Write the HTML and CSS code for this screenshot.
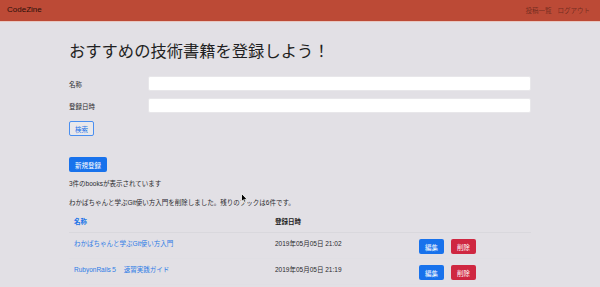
FILE: index.html
```html
<!DOCTYPE html>
<html lang="ja">
<head>
<meta charset="utf-8">
<title>CodeZine</title>
<link rel="stylesheet" href="styles.css">
</head>
<body>
<nav class="navbar">
  <a class="brand" href="#">CodeZine</a>
  <div class="nav-links">
    <a href="#">投稿一覧</a>
    <a href="#">ログアウト</a>
  </div>
</nav>
<main class="container">
  <h1 class="title">おすすめの技術書籍を登録しよう！</h1>
  <form class="search-form">
    <div class="form-row">
      <label class="form-label">名称</label>
      <input class="form-input" type="text">
    </div>
    <div class="form-row">
      <label class="form-label">登録日時</label>
      <input class="form-input" type="text">
    </div>
    <button type="button" class="btn btn-outline">検索</button>
  </form>
  <button type="button" class="btn btn-primary btn-new">新規登録</button>
  <p class="count">3件のbooksが表示されています</p>
  <p class="notice">わかばちゃんと学ぶGit使い方入門を削除しました。残りのブックは6件です。</p>
  <table class="books">
    <colgroup>
      <col class="col-name">
      <col class="col-date">
      <col>
    </colgroup>
    <thead>
      <tr>
        <th><a class="sort" href="#">名称</a></th>
        <th>登録日時</th>
        <th></th>
      </tr>
    </thead>
    <tbody>
      <tr>
        <td><a class="book-link" href="#">わかばちゃんと学ぶGit使い方入門</a></td>
        <td>2019年05月05日 21:02</td>
        <td class="actions"><button type="button" class="btn btn-primary">編集</button><button type="button" class="btn btn-danger">削除</button></td>
      </tr>
      <tr>
        <td><a class="book-link" href="#">RubyonRails５　速習実践ガイド</a></td>
        <td>2019年05月05日 21:19</td>
        <td class="actions"><button type="button" class="btn btn-primary">編集</button><button type="button" class="btn btn-danger">削除</button></td>
      </tr>
    </tbody>
  </table>
</main>
<svg class="cursor" width="7" height="11" viewBox="0 0 7 11"><path d="M0.5 0.5 L0.5 8.5 L2.4 6.8 L3.8 10 L5 9.5 L3.7 6.4 L6.2 6.4 Z" fill="#000" stroke="#fff" stroke-width="0.8"/></svg>
</body>
</html>
```

FILE: styles.css
```css
* { box-sizing: border-box; }

body {
  margin: 0;
  background: #e2e0e5;
  font-family: "Liberation Sans", "Noto Sans CJK JP", sans-serif;
  color: #2a2a2e;
  font-size: 6.5px;
  line-height: 10px;
}

a { text-decoration: none; }

.navbar {
  height: 22px;
  display: flex;
  align-items: center;
  justify-content: space-between;
  padding: 0 10px 1px 7px;
  background: #bc4a36;
  border-bottom: 1px solid #e8c7c0;
}

.brand {
  font-size: 8px;
  color: #2b0f0a;
}

.nav-links {
  display: flex;
  gap: 6px;
  white-space: nowrap;
  flex: none;
}

.nav-links a {
  font-family: "Noto Sans CJK JP", sans-serif;
  font-size: 6.5px;
  color: rgba(0, 0, 0, 0.42);
}

.container {
  width: 462px;
  margin: 0 auto;
}

.title {
  margin: 18px 0 0;
  font-size: 16.3px;
  line-height: 20px;
  font-weight: 400;
  color: #1f1f22;
  font-family: "Noto Sans CJK JP", sans-serif;
}

.search-form {
  margin-top: 16px;
}

.form-row {
  display: flex;
  align-items: center;
  height: 15px;
  margin-bottom: 7px;
}

.form-row + .form-row {
  margin-bottom: 8px;
}

.form-label {
  width: 79px;
  flex: none;
  font-family: "Noto Sans CJK JP", sans-serif;
  font-size: 6.5px;
}

.form-input {
  flex: 1;
  height: 15px;
  margin: 0;
  border: 1px solid #e8e7ea;
  border-radius: 2px;
  background: #fff;
}

.btn {
  display: inline-flex;
  align-items: center;
  justify-content: center;
  height: 15px;
  padding: 0 5px;
  margin: 0;
  border: 1px solid transparent;
  border-radius: 2px;
  font-family: "Noto Sans CJK JP", sans-serif;
  font-size: 6.5px;
  line-height: 10px;
  white-space: nowrap;
}

.btn-outline {
  border-color: #4a8ff0;
  color: #1a73e8;
  background: rgba(255, 255, 255, 0.25);
}

.btn-primary {
  background: #1872ec;
  color: #fff;
}

.btn-new {
  margin-top: 21px;
}

.btn-danger {
  background: #cf2741;
  color: #fff;
  margin-left: 7px;
}

.count {
  margin: 7px 0 0;
}

.notice {
  margin: 9px 0 0;
}

.books {
  margin-top: 4px;
  width: 100%;
  table-layout: fixed;
  border-collapse: collapse;
}

.col-name { width: 201px; }
.col-date { width: 144px; }

.books th {
  text-align: left;
  padding: 5px;
  font-weight: 700;
  border-bottom: 1px solid #d9d8dd;
  color: #222;
}

.books td {
  padding: 6px 5px 4px;
  vertical-align: top;
  border-bottom: 1px solid #e0dfe4;
  color: #2a2a2e;
}

.sort {
  color: #1a73e8;
}

.book-link {
  color: #2c7be5;
}

.actions {
  white-space: nowrap;
}

.cursor {
  position: absolute;
  left: 241px;
  top: 193px;
}
```
